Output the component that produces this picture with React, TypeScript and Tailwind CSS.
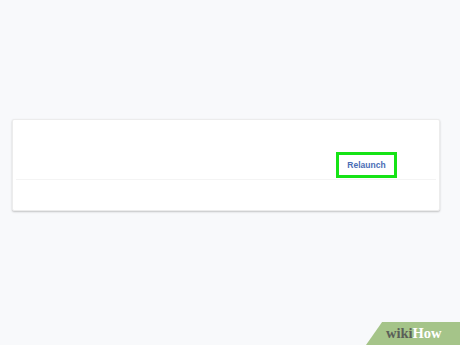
export default function App() {
  return (
    <div className="relative w-[460px] h-[345px] overflow-hidden bg-[#f8f9fb]" style={{ fontFamily: '"Liberation Sans", Arial, sans-serif' }}>
      <div className="pt-[119px] pl-[12px]">
        <div className="w-[428px] h-[92px] bg-white border border-[#ececec] rounded-[2px] shadow-[0_1px_2px_rgba(0,0,0,0.22)] flex flex-col">
          <div className="h-[28px]" />
          <div className="flex justify-end pr-[39px] border-b border-[#f4f4f4] mx-[3px] h-[32px] items-start pt-[4px]">
            <div className="w-[61px] h-[26px] border-[3px] border-[#16e316] flex items-center justify-center">
              <span className="text-[8.5px] font-bold text-[#4a6db5]">Relaunch</span>
            </div>
          </div>
        </div>
      </div>
      <div className="absolute left-[366px] top-[322px] w-[110px] h-[23px] bg-[#a5c489] -skew-x-[35deg] origin-bottom-left" />
      <div className="absolute left-[386px] top-[323px] text-[14.5px] font-bold leading-[20px]" style={{ fontFamily: '"Liberation Serif", "Times New Roman", serif' }}>
        <span className="text-[#5b5f58]">wiki</span>
        <span className="text-white">How</span>
      </div>
    </div>
  );
}
